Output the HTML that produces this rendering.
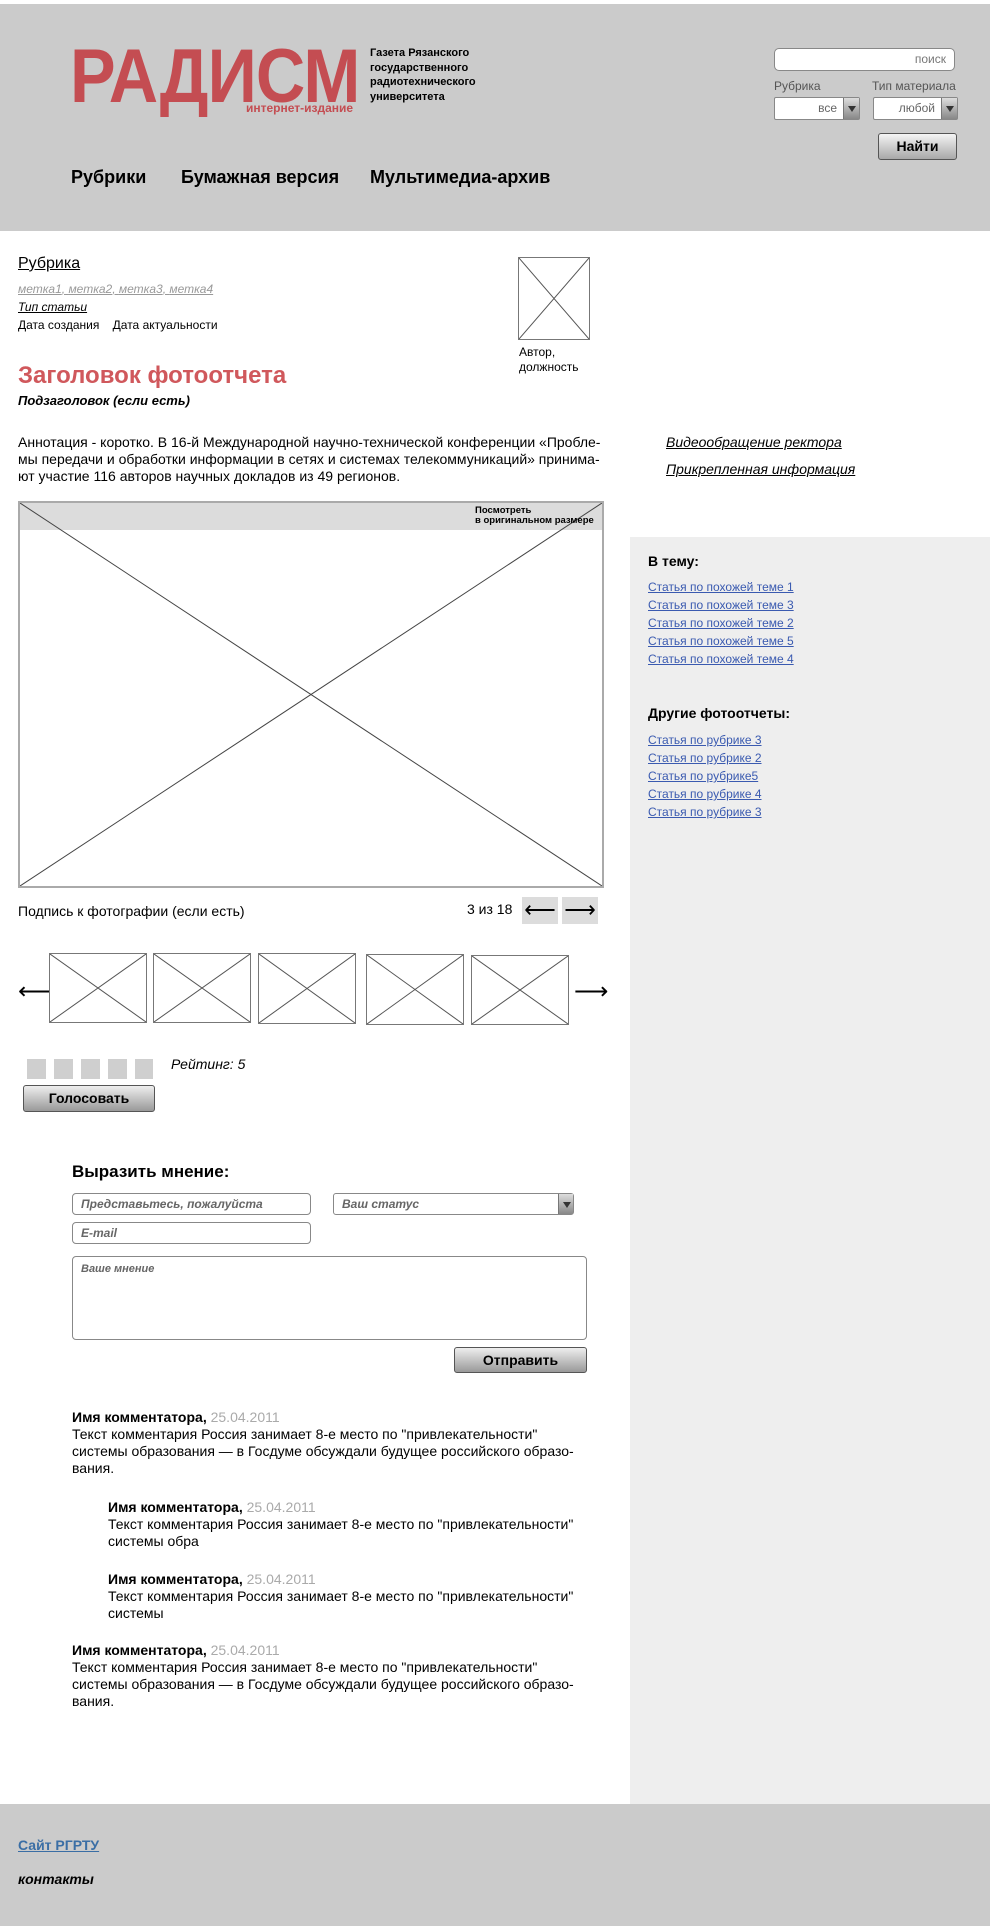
<!DOCTYPE html>
<html><head><meta charset="utf-8"><style>
*{margin:0;padding:0;box-sizing:border-box}
body{width:990px;height:1926px;position:relative;background:#fff;font-family:"Liberation Sans","Noto Sans CJK SC",sans-serif;color:#000;overflow:hidden}
.a{position:absolute;white-space:nowrap}
.ph{position:absolute;border:1px solid #777;background:#fff}
.ph svg{position:absolute;left:0;top:0;width:100%;height:100%}
.inp{position:absolute;border:1px solid #888;border-radius:4px;background:#fff;font-style:italic;color:#666;font-size:12px;font-weight:bold;padding:3px 8px}
.btn{position:absolute;border:1px solid #555;border-radius:3px;background:linear-gradient(#f4f4f4,#a8a8a8);font-weight:bold;font-size:14px;text-align:center}
.sl a{display:block;color:#3a5ab0;font-size:12px;height:18px;line-height:18px;text-decoration:underline}
.dd{position:absolute;right:0;top:0;bottom:0;width:16px;background:linear-gradient(#ddd,#888);border-left:1px solid #777}
.dd:after{content:"";position:absolute;left:4px;top:8px;border:4px solid transparent;border-top:6px solid #333}
</style></head><body>
<div style="position:absolute;left:0;top:4px;width:990px;height:227px;background:#cbcbcb"></div>
<div class="a" style="left:70px;top:32px;font-size:76px;font-weight:bold;color:#c44d52;letter-spacing:-1px;transform:scaleX(0.9);transform-origin:left;line-height:90px">РАДИСМ</div>
<div class="a" style="left:246px;top:101px;font-size:12px;font-weight:bold;color:#c44d52">интернет-издание</div>
<div class="a" style="left:370px;top:46px;font-size:11px;font-weight:bold;line-height:14.5px">Газета Рязанского<br>государственного<br>радиотехнического<br>университета</div>
<div class="inp" style="left:774px;top:48px;width:181px;height:23px;border-radius:5px;text-align:right;font-style:normal;font-weight:normal;color:#777;font-size:12px">поиск</div>
<div class="a" style="left:774px;top:79px;font-size:12px;color:#555">Рубрика</div>
<div class="a" style="left:872px;top:79px;font-size:12px;color:#555">Тип материала</div>
<div class="inp" style="left:774px;top:97px;width:86px;height:23px;border-radius:2px;text-align:right;padding-right:22px;font-style:normal;font-weight:normal;color:#666">все<span class="dd"></span></div>
<div class="inp" style="left:873px;top:97px;width:85px;height:23px;border-radius:2px;text-align:right;padding-right:22px;font-style:normal;font-weight:normal;color:#666">любой<span class="dd"></span></div>
<div class="btn" style="left:878px;top:133px;width:79px;height:27px;line-height:25px">Найти</div>
<div class="a" style="left:71px;top:167px;font-size:18px;font-weight:bold">Рубрики</div>
<div class="a" style="left:181px;top:167px;font-size:18px;font-weight:bold">Бумажная версия</div>
<div class="a" style="left:370px;top:167px;font-size:18px;font-weight:bold">Мультимедиа-архив</div>

<div style="position:absolute;left:630px;top:537px;width:360px;height:1267px;background:#eeeeee"></div>
<div style="position:absolute;left:0;top:1804px;width:990px;height:122px;background:#cbcbcb"></div>

<div class="a" style="left:18px;top:255px;font-size:16px;text-decoration:underline">Рубрика</div>
<div class="a" style="left:18px;top:282px;font-size:12px;font-style:italic;color:#999;text-decoration:underline">метка1<span style="text-decoration:none">, </span>метка2<span>, </span>метка3<span>, </span>метка4</div>
<div class="a" style="left:18px;top:300px;font-size:12px;font-style:italic;text-decoration:underline">Тип статьи</div>
<div class="a" style="left:18px;top:318px;font-size:12px">Дата создания &nbsp;&nbsp; Дата актуальности</div>
<div class="ph" style="left:518px;top:257px;width:72px;height:83px"><svg viewBox="0 0 72 83" preserveAspectRatio="none"><path d="M0 0L72 83M72 0L0 83" stroke="#555" stroke-width="1" vector-effect="non-scaling-stroke"/></svg></div>
<div class="a" style="left:519px;top:345px;font-size:12px;line-height:15px">Автор,<br>должность</div>
<div class="a" style="left:18px;top:362px;font-size:24px;font-weight:bold;color:#d0585c">Заголовок фотоотчета</div>
<div class="a" style="left:18px;top:393px;font-size:13px;font-weight:bold;font-style:italic">Подзаголовок (если есть)</div>
<div class="a" style="left:18px;top:434px;font-size:14px;line-height:17px">Аннотация - коротко. В 16-й Международной научно-технической конференции «Пробле-<br>мы передачи и обработки информации в сетях и системах телекоммуникаций» принима-<br>ют участие 116 авторов научных докладов из 49 регионов.</div>
<div class="a" style="left:666px;top:434px;font-size:14px;font-style:italic;text-decoration:underline">Видеообращение ректора</div>
<div class="a" style="left:666px;top:461px;font-size:14px;font-style:italic;text-decoration:underline">Прикрепленная информация</div>

<div class="ph" style="left:18px;top:501px;width:586px;height:387px;border:2px solid #aaa">
<div style="position:absolute;left:0;top:0;right:0;height:27px;background:#dcdcdc"></div>
<svg viewBox="0 0 586 387" preserveAspectRatio="none"><path d="M0 0L586 387M586 0L0 387" stroke="#444" stroke-width="1" vector-effect="non-scaling-stroke"/></svg>
<div class="a" style="left:455px;top:3px;font-size:9.5px;font-weight:bold;line-height:10px">Посмотреть<br>в оригинальном размере</div></div>

<div class="a" style="left:18px;top:903px;font-size:14px">Подпись к фотографии (если есть)</div>
<div class="a" style="left:467px;top:901px;font-size:14px">3 из 18</div>
<div style="position:absolute;left:522px;top:897px;width:36px;height:27px;background:#dcdcdc;font-size:22px;text-align:center;line-height:26px">⟵</div>
<div style="position:absolute;left:562px;top:897px;width:36px;height:27px;background:#dcdcdc;font-size:22px;text-align:center;line-height:26px">⟶</div>

<div class="a" style="left:18px;top:977px;font-size:24px">⟵</div>
<div class="a" style="left:574px;top:977px;font-size:24px">⟶</div>
<div class="ph" style="left:49px;top:953px;width:98px;height:70px"><svg viewBox="0 0 1 1" preserveAspectRatio="none"><path d="M0 0L1 1M1 0L0 1" stroke="#555" vector-effect="non-scaling-stroke"/></svg></div>
<div class="ph" style="left:153px;top:953px;width:98px;height:70px"><svg viewBox="0 0 1 1" preserveAspectRatio="none"><path d="M0 0L1 1M1 0L0 1" stroke="#555" vector-effect="non-scaling-stroke"/></svg></div>
<div class="ph" style="left:258px;top:953px;width:98px;height:71px"><svg viewBox="0 0 1 1" preserveAspectRatio="none"><path d="M0 0L1 1M1 0L0 1" stroke="#555" vector-effect="non-scaling-stroke"/></svg></div>
<div class="ph" style="left:366px;top:954px;width:98px;height:71px"><svg viewBox="0 0 1 1" preserveAspectRatio="none"><path d="M0 0L1 1M1 0L0 1" stroke="#555" vector-effect="non-scaling-stroke"/></svg></div>
<div class="ph" style="left:471px;top:955px;width:98px;height:70px"><svg viewBox="0 0 1 1" preserveAspectRatio="none"><path d="M0 0L1 1M1 0L0 1" stroke="#555" vector-effect="non-scaling-stroke"/></svg></div>

<div style="position:absolute;left:27px;top:1059px;width:19px;height:20px;background:#cfcfcf"></div>
<div style="position:absolute;left:54px;top:1059px;width:19px;height:20px;background:#cfcfcf"></div>
<div style="position:absolute;left:81px;top:1059px;width:19px;height:20px;background:#cfcfcf"></div>
<div style="position:absolute;left:108px;top:1059px;width:19px;height:20px;background:#cfcfcf"></div>
<div style="position:absolute;left:135px;top:1059px;width:18px;height:20px;background:#cfcfcf"></div>
<div class="a" style="left:171px;top:1056px;font-size:14px;font-style:italic">Рейтинг: 5</div>
<div class="btn" style="left:23px;top:1085px;width:132px;height:27px;line-height:25px;background:linear-gradient(#eee,#999)">Голосовать</div>

<div class="a" style="left:72px;top:1162px;font-size:17px;font-weight:bold">Выразить мнение:</div>
<div class="inp" style="left:72px;top:1193px;width:239px;height:22px">Представьтесь, пожалуйста</div>
<div class="inp" style="left:333px;top:1193px;width:241px;height:22px;border-radius:3px">Ваш статус<span class="dd" style="width:15px"></span></div>
<div class="inp" style="left:72px;top:1222px;width:239px;height:22px">E-mail</div>
<div class="inp" style="left:72px;top:1256px;width:515px;height:84px;padding-top:6px;font-size:11px">Ваше мнение</div>
<div class="btn" style="left:454px;top:1347px;width:133px;height:26px;line-height:24px;background:linear-gradient(#eee,#999)">Отправить</div>

<div class="a" style="left:72px;top:1409px;font-size:14px;line-height:17px"><b>Имя комментатора,</b> <span style="color:#aaa">25.04.2011</span><br>Текст комментария Россия занимает 8-е место по "привлекательности"<br>системы образования — в Госдуме обсуждали будущее российского образо-<br>вания.</div>
<div class="a" style="left:108px;top:1499px;font-size:14px;line-height:17px"><b>Имя комментатора,</b> <span style="color:#aaa">25.04.2011</span><br>Текст комментария Россия занимает 8-е место по "привлекательности"<br>системы обра</div>
<div class="a" style="left:108px;top:1571px;font-size:14px;line-height:17px"><b>Имя комментатора,</b> <span style="color:#aaa">25.04.2011</span><br>Текст комментария Россия занимает 8-е место по "привлекательности"<br>системы</div>
<div class="a" style="left:72px;top:1642px;font-size:14px;line-height:17px"><b>Имя комментатора,</b> <span style="color:#aaa">25.04.2011</span><br>Текст комментария Россия занимает 8-е место по "привлекательности"<br>системы образования — в Госдуме обсуждали будущее российского образо-<br>вания.</div>

<div class="a" style="left:648px;top:553px;font-size:14px;font-weight:bold">В тему:</div>
<div class="a sl" style="left:648px;top:578px"><a>Статья по похожей теме 1</a><a>Статья по похожей теме 3</a><a>Статья по похожей теме 2</a><a>Статья по похожей теме 5</a><a>Статья по похожей теме 4</a></div>
<div class="a" style="left:648px;top:705px;font-size:14px;font-weight:bold">Другие фотоотчеты:</div>
<div class="a sl" style="left:648px;top:731px"><a>Статья по рубрике 3</a><a>Статья по рубрике 2</a><a>Статья по рубрике5</a><a>Статья по рубрике 4</a><a>Статья по рубрике 3</a></div>

<div class="a" style="left:18px;top:1837px;font-size:14px;font-weight:bold;color:#3a6ea5;text-decoration:underline">Сайт РГРТУ</div>
<div class="a" style="left:18px;top:1871px;font-size:14px;font-weight:bold;font-style:italic">контакты</div>
</body></html>
